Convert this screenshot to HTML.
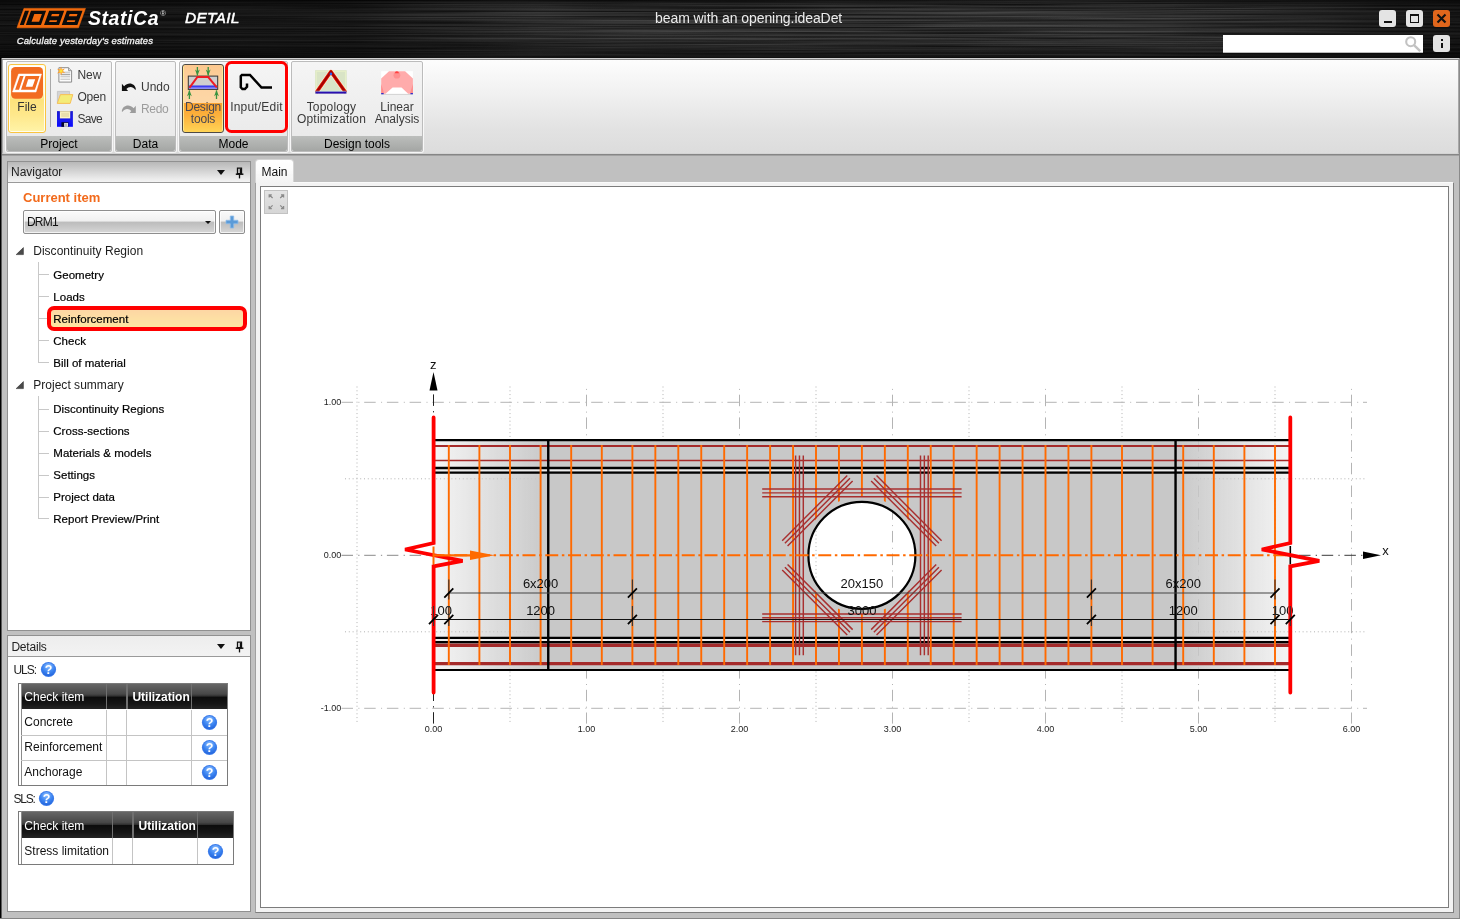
<!DOCTYPE html>
<html lang="en">
<head>
<meta charset="utf-8">
<title>IDEA StatiCa Detail - beam with an opening.ideaDet</title>
<style>
*{box-sizing:border-box;margin:0;padding:0}
html,body{width:1460px;height:919px;overflow:hidden}
body{position:relative;background:#c0c0c0;font-family:"Liberation Sans",sans-serif;font-size:12px;color:#1a1a1a;-webkit-font-smoothing:antialiased}
.abs{position:absolute}
.t{position:absolute;white-space:nowrap;line-height:14px}
/* title bar */
#tb{position:absolute;left:0;top:0;width:1460px;height:58px;background:
 repeating-linear-gradient(180deg,rgba(255,255,255,.035) 0 1px,rgba(0,0,0,0) 1px 3px,rgba(255,255,255,.02) 3px 4px,rgba(0,0,0,0) 4px 7px),
 linear-gradient(180deg,#0a0a0a 0,#1a1a1a 10px,#232323 18px,#1c1c1c 26px,#111 36px,#0c0c0c 46px,#050505 57px)}
#tbl{position:absolute;left:0;top:58px;width:1460px;height:2px;background:linear-gradient(180deg,#d2d2d2 0,#d2d2d2 50%,#8a8a8a 50%,#8a8a8a 100%)}
#lb{position:absolute;left:0;top:58px;width:2px;height:861px;background:linear-gradient(90deg,#000 0,#000 50%,#5c5c5c 50%,#5c5c5c 100%)}
.wb{position:absolute;width:17px;height:17px;border-radius:3px;background:#e4e4e4}
/* ribbon */
#rb{position:absolute;left:2px;top:60px;width:1457px;height:94px;border:1px solid #a8a8a8;border-top:none;border-bottom-color:#d4d4d4;border-radius:0 0 2px 2px;background:linear-gradient(180deg,#fdfdfd 0,#f1f1f1 35%,#e2e2e2 75%,#dcdcdc 100%)}
.grp{position:absolute;top:61px;height:91px;border:1px solid #bcbcbc;border-radius:2px;background:linear-gradient(180deg,#f5f5f5 0,#ededed 60%,#e8e8e8 100%);box-shadow:0 0 0 1px rgba(255,255,255,.75)}
.grp .gl{position:absolute;left:0;right:0;bottom:0;height:15px;background:linear-gradient(180deg,#bcbebc 0,#b0b2b0 50%,#a4a6a4 100%);border-radius:0 0 2px 2px;text-align:center;font-size:12px;line-height:17px;color:#000}
.rt{position:absolute;white-space:nowrap;font-size:12px;line-height:12px;color:#3a3a3a;text-align:center}
/* panels */
.ph{position:absolute;left:0;top:0;right:0;height:21px;border-bottom:1px solid #9a9a9a;background:linear-gradient(180deg,#b8b8b8 0,#cacaca 30%,#e6e6e6 75%,#f4f4f4 100%)}
.panel{position:absolute;left:7px;width:244px;background:#fff;border:1px solid #909090}
.tri{position:absolute;width:0;height:0;border-left:4px solid transparent;border-right:4px solid transparent;border-top:5px solid #111}
.ti{position:absolute;left:46px;white-space:nowrap;font-size:11.5px;line-height:14px;color:#111;letter-spacing:.1px}
.tp{position:absolute;left:26px;white-space:nowrap;font-size:12px;line-height:14px;color:#222}
.exp{position:absolute;left:9px;width:0;height:0;border-left:7px solid transparent;border-bottom:7px solid #333}
.tl{position:absolute;background:#c8c8c8}
table.g{position:absolute;border-collapse:collapse;font-size:12px}
table.g td,table.g th{border:1px solid #c6c6c6;height:25px;padding:0 0 0 4px;text-align:left;font-weight:normal;white-space:nowrap;color:#111}
table.g th{height:26px;color:#fff;border:1px solid #6d6d6d;background:linear-gradient(180deg,#5c5c5c 0,#3c3c3c 45%,#0e0e0e 50%,#1d1d1d 100%)}
.q{display:inline-block;width:15px;height:15px;vertical-align:middle}
.dw{position:absolute;left:0;top:0}
</style>
</head>
<body>
<div id="app" style="position:absolute;left:0;top:0;width:1460px;height:919px;will-change:transform">
<div id="tb"></div>
<svg class="abs" style="left:0;top:0" width="1460" height="58" viewBox="0 0 1460 58">
 <defs>
  <filter id="brush" x="0" y="0" width="100%" height="100%" color-interpolation-filters="sRGB">
   <feTurbulence type="fractalNoise" baseFrequency="0.0035 0.55" numOctaves="3" seed="11" result="n"/>
   <feColorMatrix in="n" type="matrix" values="0.32 0 0 0 0.025  0.32 0 0 0 0.025  0.32 0 0 0 0.025  0 0 0 0 1"/>
  </filter>
  <linearGradient id="tbv" x1="0" x2="0" y1="0" y2="1"><stop offset="0" stop-color="#000" stop-opacity=".6"/><stop offset=".08" stop-color="#000" stop-opacity=".2"/><stop offset=".2" stop-color="#000" stop-opacity="0"/><stop offset=".7" stop-color="#000" stop-opacity=".05"/><stop offset=".9" stop-color="#000" stop-opacity=".35"/><stop offset="1" stop-color="#000" stop-opacity=".6"/></linearGradient>
  <linearGradient id="tbh" x1="0" x2="1" y1="0" y2="0"><stop offset="0" stop-color="#000" stop-opacity=".6"/><stop offset=".24" stop-color="#000" stop-opacity=".5"/><stop offset=".37" stop-color="#000" stop-opacity=".08"/><stop offset=".8" stop-color="#000" stop-opacity="0"/><stop offset=".93" stop-color="#000" stop-opacity=".4"/><stop offset="1" stop-color="#000" stop-opacity=".55"/></linearGradient>
 </defs>
 <rect x="0" y="0" width="1460" height="58" filter="url(#brush)"/>
 <rect x="0" y="0" width="1460" height="58" fill="url(#tbv)"/>
 <rect x="0" y="0" width="1460" height="58" fill="url(#tbh)"/>
</svg>
<div id="tbl"></div>
<!-- logo -->
<svg class="abs" style="left:0;top:0" width="260" height="57" viewBox="0 0 260 57">
 <path d="M23.96 8.4L85.46 8.4L78.47 27.8L16.97 27.8Z" fill="#f26a0c" stroke="#f26a0c" stroke-width=".6" stroke-linejoin="round"/>
 <path d="M24.97 10.85L28.97 10.85L23.84 25.1L19.84 25.1ZM30.97 10.85L46.07 10.85L40.94 25.1L25.84 25.1ZM49.17 10.85L64.17 10.85L59.04 25.1L44.04 25.1ZM66.87 10.85L82.47 10.85L77.34 25.1L61.74 25.1Z" fill="#0b0b0b"/>
 <path d="M34.3 14.1L41.9 14.1L39.13 21.8L31.53 21.8ZM51.9 14.1L59.4 14.1L58.61 16.3L51.11 16.3ZM49.71 20.2L57.21 20.2L56.52 22.1L49.02 22.1ZM69.6 14.1L77.5 14.1L76.71 16.3L68.81 16.3ZM67.41 20.2L75.31 20.2L74.62 22.1L66.72 22.1Z" fill="#f26a0c"/>
</svg>
<div class="t" style="left:88px;top:6px;font-size:19.5px;line-height:24px;font-weight:bold;font-style:italic;color:#fff;letter-spacing:.55px">StatiCa</div>
<div class="t" style="left:160px;top:9.2px;font-size:8px;line-height:10px;color:#ddd;font-style:italic">®</div>
<div class="t" style="left:185px;top:8px;font-size:15.5px;line-height:20px;font-style:italic;color:#fff;letter-spacing:.25px;-webkit-text-stroke:.5px #fff">DETAIL</div>
<div class="t" style="left:16.7px;top:35px;font-size:9.5px;line-height:12px;font-style:italic;color:#f4f4f4;letter-spacing:.1px;-webkit-text-stroke:.3px #f4f4f4">Calculate yesterday's estimates</div>
<div class="t" style="left:655px;top:10px;font-size:14px;line-height:16px;color:#ececec;letter-spacing:-.07px">beam with an opening.ideaDet</div>
<!-- window buttons -->
<div class="wb" style="left:1379px;top:10px"><div class="abs" style="left:4.5px;top:10.5px;width:8px;height:2px;background:#111"></div></div>
<div class="wb" style="left:1406px;top:10px"><div class="abs" style="left:4px;top:4px;width:9px;height:9px;border:1.5px solid #111;border-top-width:2.5px"></div></div>
<div class="wb" style="left:1433px;top:10px;background:#e0661c"><svg class="abs" style="left:0;top:0" width="17" height="17"><path d="M4.5 4.5L12.5 12.5M12.5 4.5L4.5 12.5" stroke="#111" stroke-width="2.1" fill="none"/></svg></div>
<div class="abs" style="left:1223px;top:35px;width:200px;height:17.5px;background:#fff;border-bottom:1px solid #bbb"></div>
<svg class="abs" style="left:1403px;top:35px" width="20" height="18"><circle cx="7.7" cy="6.7" r="4.5" fill="none" stroke="#c2c2c2" stroke-width="2.1"/><path d="M11 10.2L17.2 16.1" stroke="#c2c2c2" stroke-width="2.4" fill="none"/></svg>
<div class="wb" style="left:1433px;top:35px;height:16.8px"><div class="abs" style="left:7.8px;top:4px;width:2.2px;height:2.1px;background:#111"></div><div class="abs" style="left:7.8px;top:7.5px;width:2.2px;height:5.4px;background:#111"></div></div>

<!-- ribbon -->
<div id="rb"></div>
<div class="grp" style="left:6px;width:106px"><div class="gl">Project</div></div>
<div class="grp" style="left:115px;width:61px"><div class="gl">Data</div></div>
<div class="grp" style="left:179px;width:109px"><div class="gl">Mode</div></div>
<div class="grp" style="left:291px;width:132px"><div class="gl">Design tools</div></div>
<div class="abs" style="left:8px;top:64px;width:38px;height:69px;border:1px solid #f9c440;border-radius:3px;background:linear-gradient(180deg,#fff 0,#fff6d0 40%,#fde27c 52%,#fee88c 75%,#fff4a8 100%);box-shadow:inset 0 0 0 1px #fffdf0"></div>
<svg class="abs" style="left:11px;top:67px" width="33" height="32" viewBox="0 0 33 32"><rect x=".1" y="0" width="31.9" height="31.8" rx="4.2" fill="#f26c21"/><path d="M7.6 7H30.5L25 25H1.5Z" fill="#fff" stroke="#fff" stroke-width=".5" stroke-linejoin="round"/><path d="M8.9 9.1H12.6L8.05 22.8H4.1Z M14.6 9.1H28.5L23.9 22.8H10Z" fill="#f26c21"/><path d="M17.2 12.2H24.2L21.5 19.8H14.8Z" fill="#fff"/></svg>
<div class="rt" style="left:8px;top:100.5px;width:38px;color:#333">File</div>
<div class="abs" style="left:50px;top:69px;width:1px;height:58px;background:#a8a8a8"></div>
<svg class="abs" style="left:55px;top:65px" width="20" height="20" viewBox="0 0 20 20"><path d="M3.9 2.7H13.6L16.6 5.7V17.1H3.9Z" fill="#fcfcfc" stroke="#8c8c8c" stroke-width="1"/><path d="M13.6 2.7V5.7H16.6" fill="#e4e4e4" stroke="#8c8c8c" stroke-width=".9"/><path d="M5.4 7.2H15.2M5.4 11.8H15.2M5.4 14.2H15.2" stroke="#bdbdbd" stroke-width="1"/><path d="M5.4 9.5H15.2" stroke="#a8a8a8" stroke-width="1.5"/><path d="M6 1.4L6.9 4.4L9.9 3.4L7.9 5.9L10.2 8L7 7.6L6.2 10.6L5.2 7.6L2 8.4L4.2 6.1L2 3.8L5.1 4.4Z" fill="#ff9a28"/><circle cx="6" cy="6" r="1.7" fill="#ffe23a"/></svg>
<div class="rt" style="left:77.4px;top:68.5px">New</div>
<svg class="abs" style="left:55px;top:88px" width="20" height="18" viewBox="0 0 20 18"><path d="M2.4 3.4H14.6V15.2H2.4Z" fill="#d4d4d4" stroke="#c2c2c2" stroke-width=".8"/><path d="M5.4 6.6H17.8L15.2 15.4H2.3Z" fill="#f4ec78" stroke="#f8bc50" stroke-width=".9"/></svg>
<div class="rt" style="left:77.4px;top:90.5px;letter-spacing:-.2px">Open</div>
<svg class="abs" style="left:55px;top:110px" width="20" height="18" viewBox="0 0 20 18"><defs><linearGradient id="svg1" x1="0" x2="0" y1="0" y2="1"><stop offset="0" stop-color="#1a1ad0"/><stop offset=".6" stop-color="#1818f0"/><stop offset="1" stop-color="#0808ff"/></linearGradient></defs><path d="M2 1.1H17.9V16.8H2Z" fill="url(#svg1)"/><path d="M4.9 1.1H15.2V8.4H4.9Z" fill="#fdf4c4"/><path d="M4.9 1.1H15.2V2.2H4.9Z" fill="#d8cca0"/><path d="M6.2 4H14M6.2 6H14" stroke="#d2c592" stroke-width=".9"/><path d="M6.4 12.2H13.4V16.8H6.4Z" fill="#05052a"/><path d="M9.2 12.9H12.9V16.8H9.2Z" fill="#f6f6f6"/><path d="M11 13.4V16.4" stroke="#444" stroke-width=".7"/></svg>
<div class="rt" style="left:77.4px;top:112.5px;letter-spacing:-.7px">Save</div>
<svg class="abs" style="left:120px;top:80px" width="18" height="13" viewBox="0 0 18 13"><path d="M1.9 3.8V10.9H8.1L6.4 8.9C8.6 6.4 12.8 5.8 15.1 9.8L15.9 9.6C15.5 3.6 8.6 1.3 4.1 6.2Z" fill="#111"/></svg>
<div class="rt" style="left:141px;top:80.8px">Undo</div>
<svg class="abs" style="left:120px;top:101.8px" width="18" height="13" viewBox="0 0 18 13"><g transform="translate(17.7 0) scale(-1 1)"><path d="M1.9 3.8V10.9H8.1L6.4 8.9C8.6 6.4 12.8 5.8 15.1 9.8L15.9 9.6C15.5 3.6 8.6 1.3 4.1 6.2Z" fill="#9c9c9c"/></g></svg>
<div class="rt" style="left:141px;top:102.6px;color:#9c9c9c;letter-spacing:-.3px">Redo</div>
<div class="abs" style="left:182px;top:64px;width:42px;height:68.7px;border:1px solid #4e4a44;border-radius:3px;background:linear-gradient(180deg,#fdc88e 0,#fdd2a0 25%,#fdd7a6 56%,#fba22e 57.5%,#fcb03c 75%,#ffd456 100%);box-shadow:inset 1px 0 0 rgba(255,236,150,.9),inset -1px 0 0 rgba(255,236,150,.9)"></div>
<svg class="abs" style="left:186px;top:65px" width="35" height="36" viewBox="0 0 35 36"><rect x="2.3" y="11.1" width="29.4" height="13.3" fill="#cfcfcf" stroke="#333" stroke-width="1"/><path d="M3 22.9H31" stroke="#8a8af4" stroke-width="2.2"/><path d="M3 21.4H31" stroke="#3c3cf0" stroke-width="1.9"/><path d="M3.4 22.9L11.4 12H22.2L30.8 22.4" fill="none" stroke="#ee1c24" stroke-width="2" stroke-linejoin="miter"/><g stroke="#3a9440" stroke-width="1.3" fill="#3a9440"><path d="M11.4 2V10.5M22.2 2V10.5M3.4 25.5V34M30.5 25.5V34"/><path d="M9 4.6L11.4 10.8L13.8 4.6L11.4 6.2Z M19.8 4.6L22.2 10.8L24.6 4.6L22.2 6.2Z M1 31.2L3.4 25L5.8 31.2L3.4 29.6Z M28.1 31.2L30.5 25L32.9 31.2L30.5 29.6Z" stroke="none"/></g></svg>
<div class="rt" style="left:182px;top:101px;width:42px;color:#4a4852;letter-spacing:-.2px">Design<br>tools</div>
<div class="abs" style="left:225px;top:61px;width:62.8px;height:72.1px;border:3.8px solid #ff0000;border-radius:6.5px"></div>
<svg class="abs" style="left:236px;top:70px" width="40" height="24" viewBox="0 0 40 24"><path d="M11 13.5V16.8L8.9 19H6.4L4.8 17.3V6.2L5.9 5H14L25.5 17.5H36" fill="none" stroke="#000" stroke-width="2.5" stroke-linejoin="miter"/></svg>
<div class="rt" style="left:226px;top:101px;width:61px;letter-spacing:.2px">Input/Edit</div>
<svg class="abs" style="left:313px;top:67px" width="36" height="30" viewBox="0 0 36 30"><rect x="2.1" y="3.2" width="31.6" height="23.4" fill="#d9e4c6"/><rect x="3.2" y="4.3" width="29.4" height="21" fill="none" stroke="#e6efc8" stroke-width="1.2"/><path d="M3.4 25.4L17.9 4.6L32.6 25.4" fill="none" stroke="#fff" stroke-width="4.6" stroke-linejoin="round" opacity=".8"/><path d="M3.4 25.4L17.9 4.6L32.6 25.4" fill="none" stroke="#f03a10" stroke-width="3.6" stroke-linejoin="round"/><path d="M3.4 25.4L17.9 4.6L32.6 25.4" fill="none" stroke="#a80000" stroke-width="2.5" stroke-linejoin="round"/><path d="M2.4 24.3H33.4" stroke="#c8f4f0" stroke-width=".8"/><path d="M2.4 25.6H33.4" stroke="#2a0fb0" stroke-width="2"/><circle cx="17.9" cy="6.9" r="1.3" fill="#2a60f0"/></svg>
<div class="rt" style="left:292.5px;top:101px;width:78px;letter-spacing:.2px">Topology<br>Optimization</div>
<svg class="abs" style="left:379px;top:67px" width="36" height="30" viewBox="0 0 36 30"><rect x="2.2" y="4.2" width="31.7" height="23.3" fill="#fff"/><path d="M2.2 27.4H33.9" stroke="#c8c8c8" stroke-width=".8"/><path d="M10 4.2H26.1L33.9 11.5V26.8H29.2L22.5 20.4H13.6L6.5 26.8H2.2V11.5Z" fill="#ffabab"/><path d="M2.2 17V26.8H5.2Z M33.9 17V26.8H30.9Z" fill="#ff8c8c"/><circle cx="17.9" cy="8.2" r="3.4" fill="#ff9090"/><path d="M15.9 6.2A2 2 0 0 1 19.9 6.2Z" fill="#ff4040"/><path d="M2.2 26.6H4.6M31.5 26.6H33.9" stroke="#3030d0" stroke-width="1.2"/></svg>
<div class="rt" style="left:371.5px;top:101px;width:51px;letter-spacing:0">Linear<br>Analysis</div>
<!-- left border -->
<div id="lb"></div>
<div class="abs" style="left:1459px;top:58px;width:1px;height:861px;background:#8a8a8a"></div>
<div class="abs" style="left:0;top:918px;width:1460px;height:1px;background:#858585"></div>
<div class="abs" style="left:2px;top:154px;width:1457px;height:2px;background:linear-gradient(180deg,#868686 0,#868686 50%,#a2a2a2 50%,#a2a2a2 100%)"></div>
<svg width="0" height="0" style="position:absolute"><defs><radialGradient id="qg" cx=".5" cy=".25" r=".8"><stop offset="0" stop-color="#8fc0ff"/><stop offset=".55" stop-color="#3d86f2"/><stop offset="1" stop-color="#1f5fd8"/></radialGradient></defs></svg>
<div class="panel" style="top:161px;height:470px">
<div class="ph"><div class="t" style="left:3px;top:3px;font-size:12px;color:#222">Navigator</div><div class="tri" style="left:209px;top:8px"></div><svg class="abs" style="left:227px;top:5px" width="10" height="12"><path d="M2.5 1.2H6.5V6.6H2.5Z" fill="none" stroke="#111" stroke-width="1.3"/><path d="M5.6 1.5V6.5" stroke="#111" stroke-width="1.6"/><path d="M0.8 7.2H8.4" stroke="#111" stroke-width="1.5"/><path d="M4.5 7.5V11.4" stroke="#111" stroke-width="1.3"/></svg></div>
</div>
<div class="t" style="left:23px;top:190px;font-size:13px;line-height:15px;font-weight:bold;color:#f26a1b">Current item</div>
<div class="abs" style="left:23px;top:210px;width:193px;height:24px;border:1px solid #8e8e8e;border-radius:2px;background:linear-gradient(180deg,#fafafa 0,#f0f0f0 46%,#bcbcbc 50%,#c6c6c6 70%,#d8d8d8 100%);box-shadow:inset 0 0 0 1px rgba(255,255,255,.7)"></div>
<div class="t" style="left:27px;top:215px;font-size:12px;color:#111;letter-spacing:-.8px">DRM1</div>
<div class="tri" style="left:204.5px;top:220.5px;border-left-width:3px;border-right-width:3px;border-top-width:3.5px"></div>
<div class="abs" style="left:219px;top:210px;width:26px;height:24px;border:1px solid #8e8e8e;border-radius:2px;background:linear-gradient(180deg,#fafafa 0,#f0f0f0 46%,#bcbcbc 50%,#c6c6c6 70%,#d8d8d8 100%);box-shadow:inset 0 0 0 1px rgba(255,255,255,.7)"></div>
<svg class="abs" style="left:225px;top:215px" width="14" height="14"><path d="M5.3 1H8.7V5.3H13V8.7H8.7V13H5.3V8.7H1V5.3H5.3Z" fill="#5b9bd8" stroke="#8fbce8" stroke-width=".8"/></svg>
<svg class="abs" style="left:15px;top:246px" width="10" height="10"><path d="M8.4 1.6V8.6H1.2Z" fill="#4a4a4a" stroke="#333" stroke-width=".6"/></svg>
<div class="t" style="left:33.2px;top:244px;font-size:12px;color:#1c1c1c;letter-spacing:.03px">Discontinuity Region</div>
<div class="abs" style="left:47px;top:305.8px;width:200px;height:25.2px;border:4.1px solid #ff0000;border-radius:7px;background:linear-gradient(180deg,#fdd6a4 0,#fddfa4 50%,#fde7a0 100%)"></div>
<div class="t" style="left:53.3px;top:268px;font-size:11.5px;color:#000;letter-spacing:.02px;-webkit-text-stroke:.2px #000">Geometry</div>
<div class="t" style="left:53.3px;top:290px;font-size:11.5px;color:#000;letter-spacing:.02px;-webkit-text-stroke:.2px #000">Loads</div>
<div class="t" style="left:53.3px;top:312px;font-size:11.5px;color:#000;letter-spacing:.02px;-webkit-text-stroke:.2px #000">Reinforcement</div>
<div class="t" style="left:53.3px;top:334px;font-size:11.5px;color:#000;letter-spacing:.02px;-webkit-text-stroke:.2px #000">Check</div>
<div class="t" style="left:53.3px;top:356px;font-size:11.5px;color:#000;letter-spacing:.02px;-webkit-text-stroke:.2px #000">Bill of material</div>
<svg class="abs" style="left:15px;top:380px" width="10" height="10"><path d="M8.4 1.6V8.6H1.2Z" fill="#4a4a4a" stroke="#333" stroke-width=".6"/></svg>
<div class="t" style="left:33.2px;top:378px;font-size:12px;color:#1c1c1c;letter-spacing:.03px">Project summary</div>
<div class="t" style="left:53.3px;top:402px;font-size:11.5px;color:#000;letter-spacing:.02px;-webkit-text-stroke:.2px #000">Discontinuity Regions</div>
<div class="t" style="left:53.3px;top:424px;font-size:11.5px;color:#000;letter-spacing:.02px;-webkit-text-stroke:.2px #000">Cross-sections</div>
<div class="t" style="left:53.3px;top:446px;font-size:11.5px;color:#000;letter-spacing:.02px;-webkit-text-stroke:.2px #000">Materials &amp; models</div>
<div class="t" style="left:53.3px;top:468px;font-size:11.5px;color:#000;letter-spacing:.02px;-webkit-text-stroke:.2px #000">Settings</div>
<div class="t" style="left:53.3px;top:490px;font-size:11.5px;color:#000;letter-spacing:.02px;-webkit-text-stroke:.2px #000">Project data</div>
<div class="t" style="left:53.3px;top:512px;font-size:11.5px;color:#000;letter-spacing:.02px;-webkit-text-stroke:.2px #000">Report Preview/Print</div>
<div class="tl" style="left:38px;top:262px;width:1px;height:101px"></div>
<div class="tl" style="left:38px;top:274px;width:11px;height:1px"></div>
<div class="tl" style="left:38px;top:296px;width:11px;height:1px"></div>
<div class="tl" style="left:38px;top:318px;width:9px;height:1px"></div>
<div class="tl" style="left:38px;top:340px;width:11px;height:1px"></div>
<div class="tl" style="left:38px;top:362px;width:11px;height:1px"></div>
<div class="tl" style="left:38px;top:396px;width:1px;height:123px"></div>
<div class="tl" style="left:38px;top:409px;width:11px;height:1px"></div>
<div class="tl" style="left:38px;top:431px;width:11px;height:1px"></div>
<div class="tl" style="left:38px;top:453px;width:11px;height:1px"></div>
<div class="tl" style="left:38px;top:475px;width:11px;height:1px"></div>
<div class="tl" style="left:38px;top:497px;width:11px;height:1px"></div>
<div class="tl" style="left:38px;top:518px;width:11px;height:1px"></div>
<div class="panel" style="top:635px;height:277px">
<div class="ph" style="background:linear-gradient(180deg,#ededed,#f3f3f3)"><div class="t" style="left:3.4px;top:3.6px;font-size:12px;color:#222;letter-spacing:-.2px">Details</div><div class="tri" style="left:209px;top:8px"></div><svg class="abs" style="left:227px;top:5px" width="10" height="12"><path d="M2.5 1.2H6.5V6.6H2.5Z" fill="none" stroke="#111" stroke-width="1.3"/><path d="M5.6 1.5V6.5" stroke="#111" stroke-width="1.6"/><path d="M0.8 7.2H8.4" stroke="#111" stroke-width="1.5"/><path d="M4.5 7.5V11.4" stroke="#111" stroke-width="1.3"/></svg></div>
</div>
<div class="t" style="left:13.4px;top:663px;font-size:12px;color:#222;letter-spacing:-1px">ULS:</div>
<svg class="abs" style="left:40.1px;top:660.7px" width="17" height="17" viewBox="0 0 17 17"><circle cx="8.5" cy="8.5" r="7.6" fill="#3b7bea"/><circle cx="8.5" cy="8.5" r="6.6" fill="url(#qg)"/><text x="8.5" y="13" text-anchor="middle" font-family="'Liberation Sans',sans-serif" font-weight="bold" font-size="12.5" fill="#fff">?</text></svg>
<div class="t" style="left:13.4px;top:792px;font-size:12px;color:#222;letter-spacing:-1.2px">SLS:</div>
<svg class="abs" style="left:37.9px;top:790.1px" width="17" height="17" viewBox="0 0 17 17"><circle cx="8.5" cy="8.5" r="7.6" fill="#3b7bea"/><circle cx="8.5" cy="8.5" r="6.6" fill="url(#qg)"/><text x="8.5" y="13" text-anchor="middle" font-family="'Liberation Sans',sans-serif" font-weight="bold" font-size="12.5" fill="#fff">?</text></svg>
<div class="abs" style="left:18.2px;top:682.6px;width:210.0px;height:103.1px;border:1px solid #7a7a7a;background:#fff"></div>
<div class="abs" style="left:20.5px;top:683.6px;width:206.7px;height:25.9px;background:linear-gradient(180deg,#666 0,#484848 40%,#2e2e2e 49%,#0c0c0c 52%,#161616 80%,#242424 100%)"></div>
<div class="abs" style="left:20.5px;top:682.6px;width:1px;height:102.1px;background:#8a8a8a"></div>
<div class="abs" style="left:105.6px;top:683.6px;width:1.5px;height:25.9px;background:#707070"></div>
<div class="abs" style="left:105.8px;top:709.5px;width:1px;height:75.2px;background:#c4c4c4"></div>
<div class="abs" style="left:126.0px;top:683.6px;width:1.5px;height:25.9px;background:#707070"></div>
<div class="abs" style="left:126.2px;top:709.5px;width:1px;height:75.2px;background:#c4c4c4"></div>
<div class="abs" style="left:190.6px;top:683.6px;width:1.5px;height:25.9px;background:#707070"></div>
<div class="abs" style="left:190.8px;top:709.5px;width:1px;height:75.2px;background:#c4c4c4"></div>
<div class="abs" style="left:21.2px;top:734.6px;width:206.0px;height:1px;background:#c4c4c4"></div>
<div class="abs" style="left:21.2px;top:759.6px;width:206.0px;height:1px;background:#c4c4c4"></div>
<div class="t" style="left:24.3px;top:689.8px;color:#fff">Check item</div>
<div class="t" style="left:132.4px;top:689.8px;color:#fff;font-weight:bold">Utilization</div>
<div class="t" style="left:24.3px;top:715.3px;color:#111">Concrete</div>
<svg class="abs" style="left:200.8px;top:713.8px" width="17" height="17" viewBox="0 0 17 17"><circle cx="8.5" cy="8.5" r="7.6" fill="#3b7bea"/><circle cx="8.5" cy="8.5" r="6.6" fill="url(#qg)"/><text x="8.5" y="13" text-anchor="middle" font-family="'Liberation Sans',sans-serif" font-weight="bold" font-size="12.5" fill="#fff">?</text></svg>
<div class="t" style="left:24.3px;top:740.4px;color:#111">Reinforcement</div>
<svg class="abs" style="left:200.8px;top:738.8px" width="17" height="17" viewBox="0 0 17 17"><circle cx="8.5" cy="8.5" r="7.6" fill="#3b7bea"/><circle cx="8.5" cy="8.5" r="6.6" fill="url(#qg)"/><text x="8.5" y="13" text-anchor="middle" font-family="'Liberation Sans',sans-serif" font-weight="bold" font-size="12.5" fill="#fff">?</text></svg>
<div class="t" style="left:24.3px;top:765.4px;color:#111">Anchorage</div>
<svg class="abs" style="left:200.8px;top:763.9px" width="17" height="17" viewBox="0 0 17 17"><circle cx="8.5" cy="8.5" r="7.6" fill="#3b7bea"/><circle cx="8.5" cy="8.5" r="6.6" fill="url(#qg)"/><text x="8.5" y="13" text-anchor="middle" font-family="'Liberation Sans',sans-serif" font-weight="bold" font-size="12.5" fill="#fff">?</text></svg>
<div class="abs" style="left:18.2px;top:811.4px;width:216.0px;height:53.5px;border:1px solid #7a7a7a;background:#fff"></div>
<div class="abs" style="left:20.5px;top:812.4px;width:212.7px;height:25.9px;background:linear-gradient(180deg,#666 0,#484848 40%,#2e2e2e 49%,#0c0c0c 52%,#161616 80%,#242424 100%)"></div>
<div class="abs" style="left:20.5px;top:811.4px;width:1px;height:52.5px;background:#8a8a8a"></div>
<div class="abs" style="left:111.8px;top:812.4px;width:1.5px;height:25.9px;background:#707070"></div>
<div class="abs" style="left:112.0px;top:838.3px;width:1px;height:25.6px;background:#c4c4c4"></div>
<div class="abs" style="left:132.0px;top:812.4px;width:1.5px;height:25.9px;background:#707070"></div>
<div class="abs" style="left:132.2px;top:838.3px;width:1px;height:25.6px;background:#c4c4c4"></div>
<div class="abs" style="left:196.9px;top:812.4px;width:1.5px;height:25.9px;background:#707070"></div>
<div class="abs" style="left:197.1px;top:838.3px;width:1px;height:25.6px;background:#c4c4c4"></div>
<div class="t" style="left:24.3px;top:818.5px;color:#fff">Check item</div>
<div class="t" style="left:138.6px;top:818.5px;color:#fff;font-weight:bold">Utilization</div>
<div class="t" style="left:24.3px;top:844.3px;color:#111">Stress limitation</div>
<svg class="abs" style="left:206.9px;top:842.8px" width="17" height="17" viewBox="0 0 17 17"><circle cx="8.5" cy="8.5" r="7.6" fill="#3b7bea"/><circle cx="8.5" cy="8.5" r="6.6" fill="url(#qg)"/><text x="8.5" y="13" text-anchor="middle" font-family="'Liberation Sans',sans-serif" font-weight="bold" font-size="12.5" fill="#fff">?</text></svg>
<div class="abs" style="left:255px;top:159px;width:38.5px;height:24px;background:linear-gradient(180deg,#fff 0,#fbfbfb 60%,#f4f4f4 100%);border:1px solid #d4d4d4;border-bottom:none;border-radius:4px 4px 0 0"></div>
<div class="abs" style="left:255px;top:182px;width:1199px;height:731px;background:#f3f3f3;border-right:1px solid #7e7e7e;border-bottom:1px solid #7e7e7e;border-top:1px solid #fafafa;border-left:1px solid #a0a0a0"></div>
<div class="abs" style="left:256px;top:170px;width:36.5px;height:14px;background:linear-gradient(180deg,rgba(251,251,251,0) 0,#f6f6f6 60%,#f3f3f3 100%)"></div>
<div class="t" style="left:261.5px;top:164.5px;font-size:12px;color:#111">Main</div>
<div class="abs" style="left:260px;top:186px;width:1189px;height:722px;background:#fff;border:1px solid #7c7c7c"></div>
<div class="abs" style="left:264.3px;top:190.3px;width:23.7px;height:23.5px;background:linear-gradient(180deg,#e4e4e4,#d6d6d6);border:1px solid #c2c2c2"></div>
<svg class="abs" style="left:264px;top:190px" width="24" height="24" fill="none" stroke="#8a8a8a" stroke-width="1.25"><path d="M8.6 8L5.2 4.8M5.2 7.4V4.8H7.8 M16.2 8L19.6 4.8M17 4.8H19.6V7.4 M8.6 15.4L5.2 18.6M5.2 16V18.6H7.8 M16.2 15.4L19.6 18.6M19.6 16V18.6H17"/></svg>
<svg class="dw" width="1460" height="919" viewBox="0 0 1460 919" font-family="'Liberation Sans', sans-serif">
<defs><linearGradient id="gl" x1="0" x2="1" y1="0" y2="0"><stop offset="0" stop-color="#c8c8c8" stop-opacity=".18"/><stop offset="1" stop-color="#c8c8c8" stop-opacity="1"/></linearGradient><linearGradient id="gr" x1="0" x2="1" y1="0" y2="0"><stop offset="0" stop-color="#c8c8c8" stop-opacity="1"/><stop offset="1" stop-color="#c8c8c8" stop-opacity=".18"/></linearGradient><clipPath id="cs"><path clip-rule="evenodd" d="M400 400H1320V700H400Z M861.9 555.3 m-58.5 0 a58.5 58.5 0 1 0 117 0 a58.5 58.5 0 1 0 -117 0Z"/></clipPath></defs>
<g stroke="#b2b2b2" stroke-width="1" stroke-dasharray="1 2.8" fill="none">
<path d="M357 386.5V724"/>
<path d="M510 386.5V724"/>
<path d="M663 386.5V724"/>
<path d="M816 386.5V724"/>
<path d="M969 386.5V724"/>
<path d="M1122 386.5V724"/>
<path d="M1275 386.5V724"/>
<path d="M345 478.8H1367"/>
<path d="M345 631.8H1367"/>
</g>
<g stroke="#b4b4b4" stroke-width="1" stroke-dasharray="11.5 5.4 1 4.8" fill="none">
<path d="M341.5 402.3H1367"/>
<path d="M341.5 708.3H1367"/>
<path stroke-dashoffset="15" d="M586.5 387V723.6"/>
<path stroke-dashoffset="15" d="M739.5 387V723.6"/>
<path stroke-dashoffset="15" d="M892.5 387V723.6"/>
<path stroke-dashoffset="15" d="M1045.5 387V723.6"/>
<path stroke-dashoffset="15" d="M1198.5 387V723.6"/>
<path stroke-dashoffset="15" d="M1351.5 387V723.6"/>
</g>
<path d="M341.5 555.3H432" stroke="#8a8a8a" stroke-width="1" stroke-dasharray="11.5 5.2 1.3 4.7" fill="none"/>
<path d="M433.5 394.4V723.6" stroke="#222" stroke-width="1" stroke-dasharray="11.5 5.2 1.3 4.7" fill="none"/>
<rect x="433.5" y="440.55" width="114.75" height="229.5" fill="url(#gl)"/>
<path fill-rule="evenodd" fill="#c8c8c8" d="M548.25 440.55H1175.55V670.05H548.25Z M808.4 555.3 a53.5 53.5 0 1 0 107 0 a53.5 53.5 0 1 0 -107 0Z"/>
<rect x="1175.55" y="440.55" width="114.75" height="229.5" fill="url(#gr)"/>
<path d="M433.5 470H1290.3 M433.5 640H1290.3" stroke="#ececec" stroke-width="2.4" fill="none"/>
<g stroke="#a52a2a" fill="none">
<path d="M432 446H1290.3" stroke-width="1.8"/>
<path d="M432 460.5H1290.3" stroke-width="1.5"/>
<path d="M432 645.3H1290.3" stroke-width="3.4"/>
<path d="M432 663.6H1290.3" stroke-width="3.2"/>
</g>
<g stroke="#000" stroke-width="2.2" fill="none">
<path d="M433.5 440.2H1290.3 M433.5 670H1290.3"/>
<path d="M433.5 468H1290.3 M433.5 472.6H1290.3 M433.5 637.8H1290.3 M433.5 642.2H1290.3" stroke-width="2.3"/>
<path d="M548.25 440V670 M1175.55 440V670" stroke-width="2.4"/>
</g>
<g stroke="#ff6a00" stroke-width="1.9" fill="none" clip-path="url(#cs)">
<path d="M448.8 445V665M479.4 445V665M510 445V665M540.6 445V665M571.2 445V665M601.8 445V665M632.4 445V665M655.35 445V665M678.3 445V665M701.25 445V665M724.2 445V665M747.15 445V665M770.1 445V665M793.05 445V665M816 445V665M838.95 445V665M861.9 445V665M884.85 445V665M907.8 445V665M930.75 445V665M953.7 445V665M976.65 445V665M999.6 445V665M1022.55 445V665M1045.5 445V665M1068.45 445V665M1091.4 445V665M1122 445V665M1152.6 445V665M1183.2 445V665M1213.8 445V665M1244.4 445V665M1275 445V665"/>
</g>
<g stroke="#a83030" stroke-width="1.45" fill="none">
<path d="M795.6 455.4V655.2M928.2 455.4V655.2M762.2 489H961.6M762.2 621.6H961.6M799.45 455.4V655.2M924.35 455.4V655.2M762.2 492.85H961.6M762.2 617.75H961.6M803.3 455.4V655.2M920.5 455.4V655.2M762.2 496.7H961.6M762.2 613.9H961.6"/>
<path transform="rotate(45 861.9 555.3)" d="M815.9 496.2h92 M815.9 492.4h92 M815.9 488.6h92"/>
<path transform="rotate(135 861.9 555.3)" d="M815.9 496.2h92 M815.9 492.4h92 M815.9 488.6h92"/>
<path transform="rotate(225 861.9 555.3)" d="M815.9 496.2h92 M815.9 492.4h92 M815.9 488.6h92"/>
<path transform="rotate(315 861.9 555.3)" d="M815.9 496.2h92 M815.9 492.4h92 M815.9 488.6h92"/>
</g>
<circle cx="861.9" cy="555.3" r="53.5" fill="none" stroke="#000" stroke-width="2.2"/>
<path d="M432 555.3H1290.3" stroke="#ff6a00" stroke-width="2" stroke-dasharray="13 3.6 2.5 3.65" stroke-dashoffset="0.5" fill="none"/>
<path d="M1290.3 555.3H1364" stroke="#3a3a3a" stroke-width="1" stroke-dasharray="11.5 5.2 1.3 4.7" stroke-dashoffset="14" fill="none"/>
<path d="M1363 551.6L1381 555.3L1363 559Z" fill="#000"/>
<path d="M433.5 372L437.5 390.5H429.5Z" fill="#000"/>
<g stroke="#444" stroke-width="1.2" fill="none">
<path d="M448.8 593H1275"/>
</g>
<g stroke="#111" stroke-width="1.2" fill="none">
<path d="M433.5 619.5H1290.3"/>
</g>
<g font-size="13" fill="#111" text-anchor="middle">
<text x="433.3" y="368.8">z</text>
<text x="1385.4" y="554.8">x</text>
<text x="540.6" y="587.5">6x200</text>
<text x="861.9" y="587.5">20x150</text>
<text x="1183.2" y="587.5">6x200</text>
<text x="441.15" y="614.6">100</text>
<text x="540.6" y="614.6">1200</text>
<text x="861.9" y="614.6">3000</text>
<text x="1183.2" y="614.6">1200</text>
<text x="1282.65" y="614.6">100</text>
</g>
<g font-size="9" fill="#222">
<text x="433.5" y="731.8" text-anchor="middle">0.00</text>
<text x="586.5" y="731.8" text-anchor="middle">1.00</text>
<text x="739.5" y="731.8" text-anchor="middle">2.00</text>
<text x="892.5" y="731.8" text-anchor="middle">3.00</text>
<text x="1045.5" y="731.8" text-anchor="middle">4.00</text>
<text x="1198.5" y="731.8" text-anchor="middle">5.00</text>
<text x="1351.5" y="731.8" text-anchor="middle">6.00</text>
<text x="341.3" y="405.4" text-anchor="end">1.00</text>
<text x="341.3" y="558.4" text-anchor="end">0.00</text>
<text x="341.3" y="711.4" text-anchor="end">-1.00</text>
</g>
<path d="M1290.3 546V564.4" stroke="#000" stroke-width="1.6" fill="none"/>
<path d="M433.6 417.5V543L405.1 549.5L462.6 560.8L433.6 566.4V692.5" stroke="#ff0000" stroke-width="3.8" stroke-linecap="round" stroke-linejoin="miter" fill="none"/>
<path d="M1290.3 417.5V543L1261.8 549.5L1319.3 560.8L1290.3 566.4V692.5" stroke="#ff0000" stroke-width="3.8" stroke-linecap="round" stroke-linejoin="miter" fill="none"/>
<g stroke="#000" fill="none">
<path d="M448.8 579.5V599.5M632.4 579.5V599.5M1091.4 579.5V599.5M1275 579.5V599.5M433.5 606V626M448.8 606V626M632.4 606V626M1091.4 606V626M1275 606V626M1290.3 606V626" stroke-width="1.1" stroke="#333"/>
<path d="M444.3 597.6L453.3 588.4M627.9 597.6L636.9 588.4M1086.9 597.6L1095.9 588.4M1270.5 597.6L1279.5 588.4M429 624.1L438 614.9M444.3 624.1L453.3 614.9M627.9 624.1L636.9 614.9M1086.9 624.1L1095.9 614.9M1270.5 624.1L1279.5 614.9M1285.8 624.1L1294.8 614.9" stroke-width="1.8"/>
</g>
<path d="M433.5 546.5V564.5" stroke="#ff6a00" stroke-width="2" fill="none"/>
<path d="M433.5 555.3H471" stroke="#ff6a00" stroke-width="2.2" fill="none"/>
<path d="M470 550.5L494.5 555.3L470 560.1Z" fill="#ff6a00"/>
</svg>
</div>
</body>
</html>
